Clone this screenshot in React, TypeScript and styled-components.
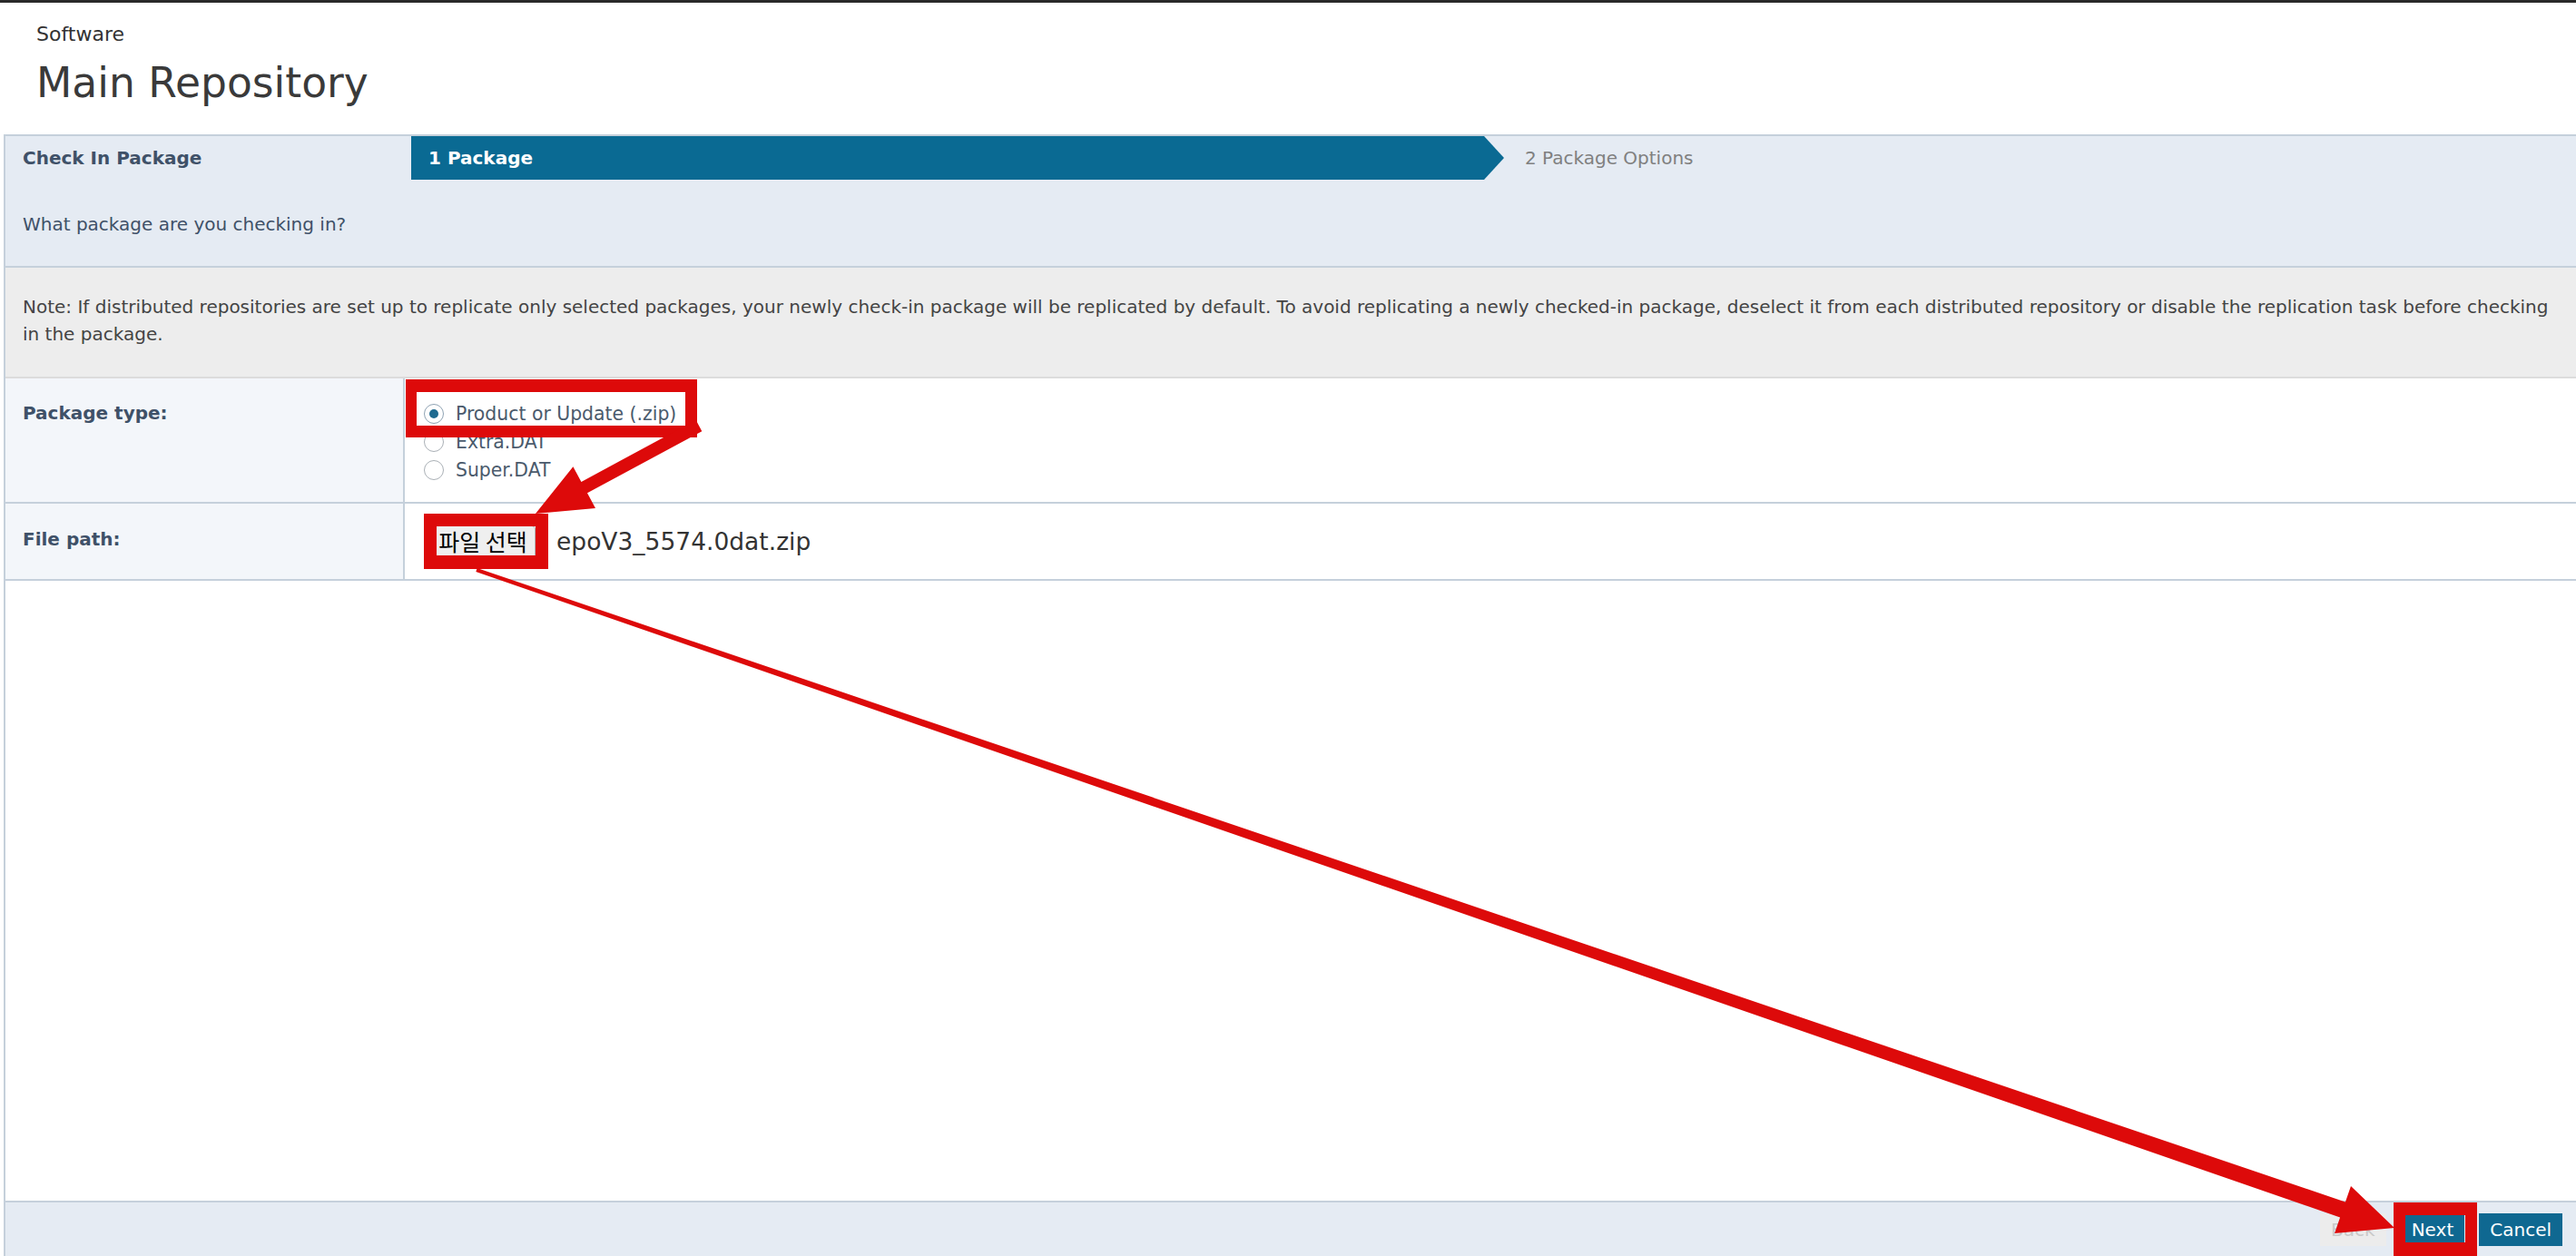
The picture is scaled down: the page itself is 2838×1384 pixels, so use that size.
import React from 'react';
import styled, { createGlobalStyle } from 'styled-components';

const GlobalStyle = createGlobalStyle`
  html, body {
    margin: 0;
    padding: 0;
    background: #ffffff;
    overflow: hidden;
  }
  body {
    font-family: "DejaVu Sans", Verdana, sans-serif;
    font-size: 20px;
    color: #333333;
  }
`;

const Page = styled.div`
  position: relative;
  display: flex;
  flex-direction: column;
  width: 100vw;
  height: 100vh;
`;

const TopRule = styled.div`
  height: 3px;
  background: #2a2a2a;
`;

const TitleBlock = styled.header`
  height: 145px;
  padding: 22px 0 0 40px;
  box-sizing: border-box;
`;

const Crumb = styled.div`
  font-size: 22px;
  line-height: 26px;
  color: #333333;
`;

const Title = styled.h1`
  margin: 14px 0 0;
  font-size: 45.6px;
  line-height: 54px;
  font-weight: normal;
  color: #3a3a3a;
`;

const Panel = styled.section`
  flex: 1;
  display: flex;
  flex-direction: column;
  margin-left: 4px;
  border-top: 2px solid #c5d0db;
  border-left: 2px solid #c5d0db;
  min-height: 0;
`;

const WizardHead = styled.div`
  background: #e5ebf3;
  border-bottom: 2px solid #c5d0db;
`;

const StepRow = styled.div`
  display: flex;
  align-items: center;
  height: 48px;
`;

const WizardTitle = styled.div`
  width: 447px;
  padding-left: 19px;
  box-sizing: border-box;
  font-weight: bold;
  color: #3f5168;
`;

const StepActive = styled.div`
  display: flex;
  align-items: center;
  width: 1204px;
  height: 100%;
  padding-left: 19px;
  box-sizing: border-box;
  background: #0a6a93;
  color: #ffffff;
  font-weight: bold;
  clip-path: polygon(0 0, 1182px 0, 100% 50%, 1182px 100%, 0 100%);
`;

const StepNext = styled.div`
  margin-left: 23px;
  color: #808080;
`;

const Prompt = styled.div`
  height: 95px;
  padding: 34px 0 0 19px;
  box-sizing: border-box;
  line-height: 30px;
  color: #3f5168;
`;

const Note = styled.div`
  background: #ededed;
  border-bottom: 2px solid #dcdcdc;
  padding: 28px 6px 32px 19px;
  line-height: 30px;
  color: #444444;
  white-space: nowrap;
  overflow: hidden;
`;

const FormRow = styled.div<{ $last?: boolean }>`
  display: flex;
  border-bottom: 2px solid #c5d0db;
  height: ${p => (p.$last ? 83 : 136)}px;
`;

const Label = styled.div<{ $center?: boolean }>`
  width: 440px;
  flex-shrink: 0;
  display: flex;
  align-items: ${p => (p.$center ? 'center' : 'flex-start')};
  padding: ${p => (p.$center ? '0 0 4px 19px' : '23px 0 0 19px')};
  box-sizing: border-box;
  background: #f3f6fa;
  border-right: 2px solid #c5d0db;
  font-weight: bold;
  line-height: 31px;
  color: #3f5168;
`;

const Value = styled.div<{ $center?: boolean }>`
  flex: 1;
  display: flex;
  flex-direction: ${p => (p.$center ? 'row' : 'column')};
  align-items: ${p => (p.$center ? 'center' : 'flex-start')};
  padding: ${p => (p.$center ? '0 0 0 28px' : '23px 0 0 21px')};
  background: #ffffff;
`;

const RadioLine = styled.label`
  display: flex;
  align-items: center;
  gap: 13px;
  height: 31px;
  font-size: 20.4px;
  color: #4a5a6c;
`;

const RadioDot = styled.span<{ $checked?: boolean }>`
  width: 22px;
  height: 22px;
  box-sizing: border-box;
  border-radius: 50%;
  border: 1.5px solid ${p => (p.$checked ? '#8fa3b3' : '#aab0b6')};
  background: #ffffff;
  display: flex;
  align-items: center;
  justify-content: center;
  &::after {
    content: '';
    width: 10px;
    height: 10px;
    border-radius: 50%;
    background: ${p => (p.$checked ? '#1f6a8f' : 'transparent')};
  }
`;

const FileButton = styled.button`
  width: 116px;
  height: 36px;
  padding: 0;
  flex-shrink: 0;
  background: #efefef;
  border: 1px solid #b4b4b4;
  border-radius: 4px;
  font-family: "Noto Sans CJK KR", sans-serif;
  font-size: 25px;
  line-height: 1;
  color: #000000;
  white-space: nowrap;
`;

const FileName = styled.span`
  margin-left: 23px;
  font-size: 26.5px;
  color: #333333;
`;

const Blank = styled.div`
  flex: 1;
  background: #ffffff;
`;

const Footer = styled.footer`
  height: 61px;
  box-sizing: border-box;
  border-top: 2px solid #c5d0db;
  background: #e5ebf3;
  display: flex;
  justify-content: flex-end;
  align-items: flex-start;
  gap: 16px;
  padding: 12px 15px 0 0;
`;

const ActionButton = styled.button<{ $disabled?: boolean }>`
  height: 36px;
  padding: 0 12px;
  border: none;
  font-family: "DejaVu Sans", Verdana, sans-serif;
  font-size: 20px;
  background: ${p => (p.$disabled ? '#ececec' : '#0f6891')};
  color: ${p => (p.$disabled ? '#c9c9c9' : '#ffffff')};
`;

const Markup = styled.svg`
  position: absolute;
  left: 0;
  top: 0;
  width: 2838px;
  height: 1384px;
  pointer-events: none;
`;

const RED = '#dd0a0a';

const radios = [
  { label: 'Product or Update (.zip)', checked: true },
  { label: 'Extra.DAT', checked: false },
  { label: 'Super.DAT', checked: false },
];

export default function App() {
  return (
    <>
      <GlobalStyle />
      <Page>
        <TopRule />
        <TitleBlock>
          <Crumb>Software</Crumb>
          <Title>Main Repository</Title>
        </TitleBlock>
        <Panel>
          <WizardHead>
            <StepRow>
              <WizardTitle>Check In Package</WizardTitle>
              <StepActive>1 Package</StepActive>
              <StepNext>2 Package Options</StepNext>
            </StepRow>
            <Prompt>What package are you checking in?</Prompt>
          </WizardHead>
          <Note>
            Note: If distributed repositories are set up to replicate only selected packages, your newly check-in package will be replicated by default. To avoid replicating a newly checked-in package, deselect it from each distributed repository or disable the replication task before checking
            <br />
            in the package.
          </Note>
          <FormRow>
            <Label>Package type:</Label>
            <Value>
              {radios.map(r => (
                <RadioLine key={r.label}>
                  <RadioDot $checked={r.checked} />
                  {r.label}
                </RadioLine>
              ))}
            </Value>
          </FormRow>
          <FormRow $last>
            <Label $center>File path:</Label>
            <Value $center>
              <FileButton>파일 선택</FileButton>
              <FileName>epoV3_5574.0dat.zip</FileName>
            </Value>
          </FormRow>
          <Blank />
          <Footer>
            <ActionButton $disabled>Back</ActionButton>
            <ActionButton>Next</ActionButton>
            <ActionButton>Cancel</ActionButton>
          </Footer>
        </Panel>
        <Markup viewBox="0 0 2838 1384">
          <path fill={RED} fillRule="evenodd" d="M447 418H768V482H447Z M459 432H755V469H459Z" />
          <path fill={RED} fillRule="evenodd" d="M467 566H604V627H467Z M481 580H590V612H481Z" />
          <path fill={RED} fillRule="evenodd" d="M2637 1325H2729V1392H2637Z M2650 1339H2716V1369H2650Z" />
          <polygon
            fill={RED}
            points="766.7,462.8 640.4,530.9 631.4,514.2 590,566 656,560 647,543.3 773.3,475.2"
          />
          <polygon
            fill={RED}
            points="525.65,626.11 2583.92,1324.49 2590,1307 2638,1353 2572,1359 2578.08,1341.51 524.35,629.89"
          />
        </Markup>
      </Page>
    </>
  );
}
